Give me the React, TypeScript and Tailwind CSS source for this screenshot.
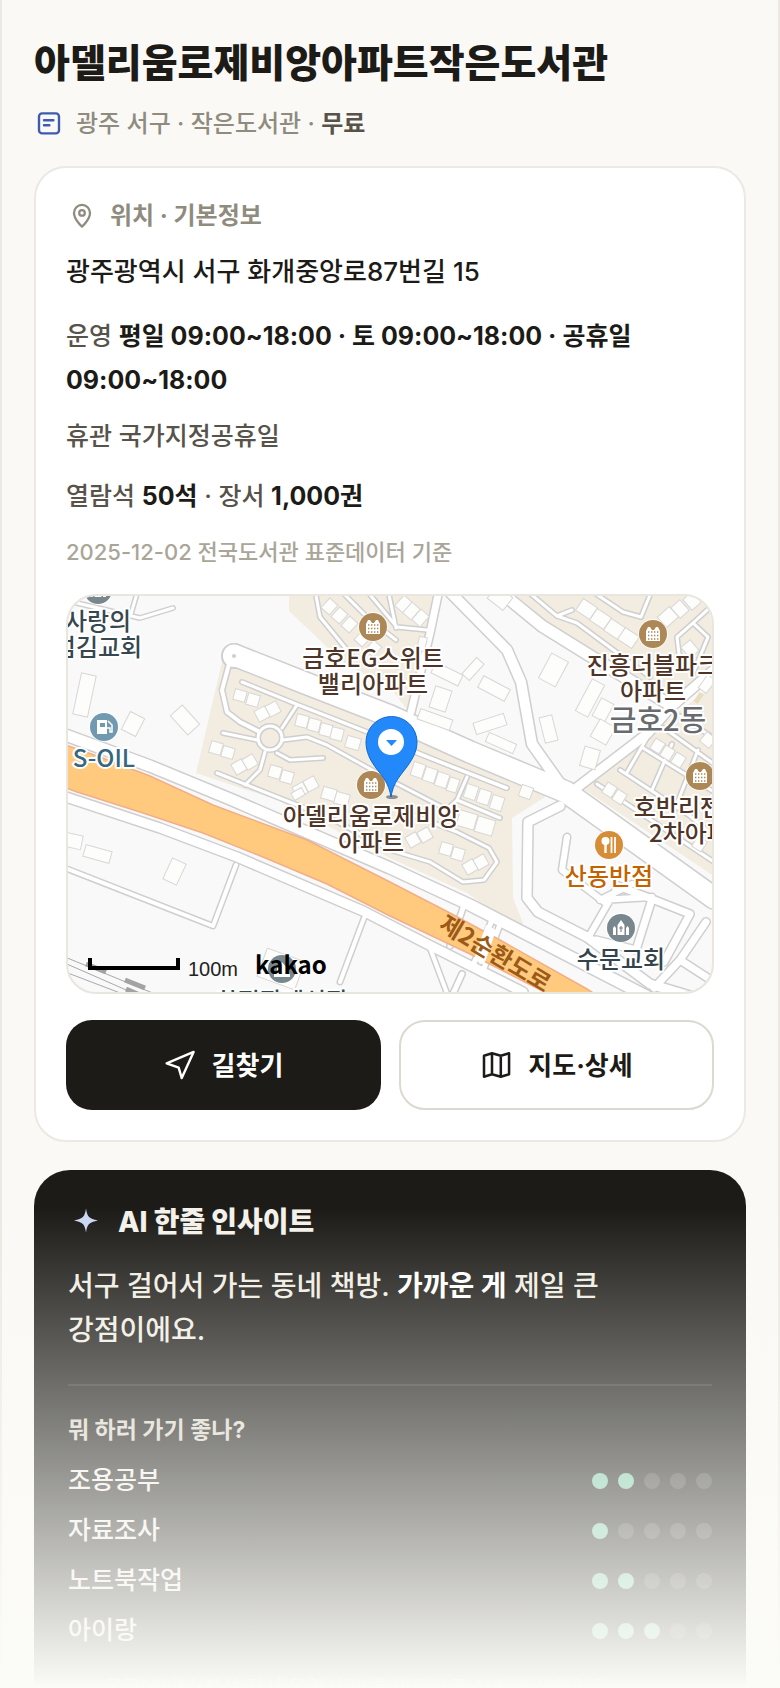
import type { ReactNode } from "react";

type Street = { d: string; w: number };
type Block = [x: number, y: number, w: number, h: number, angle: number];

const zones = [
    "M289 590V611L343 662L392 690L409 712L427 640L443 590Z",
    "M222 662L196 773L277 800L390 858L467 893L518 928L523 923L513 898L512 818L545 797L540 783L390 715L237 660Z",
    "M510 590L547 622L667 700L714 668V590Z",
    "M714 684L647 737L582 788L714 876Z",
];

const streets: Street[] = [
    { d: "M234 655L300 681L390 716L470 752L566 792L714 898", w: 21 },
    { d: "M448 590L507 650L521 682L532 744L566 792", w: 10 },
    { d: "M498 590L542 626L600 662L667 703", w: 11 },
    { d: "M566 796L647 734L670 708L716 668", w: 9 },
    { d: "M439 590L430 633L411 712", w: 7 },
    { d: "M60 599L140 618L173 608M138 590L131 614", w: 3 },
    { d: "M60 733L150 766L230 799L390 868L470 905L650 998", w: 11 },
    { d: "M60 795L160 828L237 857L363 911L427 944L523 992", w: 9 },
    { d: "M60 866L213 926L236 865M340 982L364 918M430 948L448 996", w: 4 },
    { d: "M463 908L450 946M500 924L482 974M492 920L472 968M462 974L452 996", w: 5 },
    { d: "M560 806L528 822L527 898L538 912L587 937L650 984L690 996", w: 9 },
    { d: "M567 837L562 870L607 904M652 897L600 900L632 884M588 938L618 886", w: 6 },
    { d: "M618 886L652 899L636 950L596 940M652 899L690 914L664 962M706 922L680 960L714 982M680 960L654 988", w: 7 },
    { d: "M242 682L296 704L370 733L440 762L506 788", w: 3 },
    { d: "M229 664L222 690L227 712L240 722L258 731", w: 4 },
    { d: "M297 705L282 728M223 733L257 740M283 740L307 737L327 745L390 780L440 806", w: 3 },
    { d: "M277 753L290 760L323 758M265 752L260 770L245 785M217 773L277 797L330 818L390 850L430 862L463 882L484 880L497 862L489 848L457 832L410 814", w: 3 },
    { d: "M417 753L507 788M467 777L457 800L443 813M457 800L500 818", w: 3 },
    { d: "M315 590L320 617L352 656M340 590L368 618L396 640M366 590L397 627L427 630M388 590L396 628", w: 3 },
    { d: "M526 590L557 616L577 623L650 677M590 590L623 612L641 617L652 590M557 616L572 610", w: 3 },
    { d: "M716 602L693 623L677 637L679 654L688 664M693 623L708 637L692 676", w: 3 },
    { d: "M643 748L714 792M620 770L690 816L714 836M597 784L714 862M664 728L714 764M680 716L714 738M647 738L626 774M672 744L652 790M698 750L676 806", w: 3 },
];

const railLines = "M60 955L160 996M60 961L140 996M60 970L128 996";

const blocks: Block[] = [
    [77, 674, 15, 42, 12], [125, 714, 16, 20, 27], [172, 712, 26, 16, 48],
    [64, 834, 18, 14, 12], [84, 848, 27, 12, 16], [167, 860, 15, 23, 25],
    [234, 690, 12, 11, 16], [247, 694, 12, 12, 16], [256, 708, 12, 12, -28], [267, 703, 12, 12, -28],
    [296, 715, 12, 12, 14], [308, 719, 12, 12, 14], [320, 724, 12, 12, 14], [331, 728, 12, 12, 14], [346, 737, 14, 12, 16],
    [210, 742, 12, 12, 16], [222, 747, 12, 11, 16], [233, 761, 12, 12, -30], [244, 756, 12, 12, -30],
    [269, 766, 12, 12, 16], [281, 771, 12, 12, 16], [294, 784, 12, 12, -28], [305, 778, 12, 12, -28],
    [322, 788, 14, 12, 16], [335, 793, 14, 12, 16], [292, 790, 12, 8, -30],
    [412, 763, 12, 14, 18], [424, 768, 12, 14, 18], [436, 773, 12, 14, 18], [448, 778, 10, 14, 18],
    [465, 785, 12, 14, 18], [478, 790, 12, 14, 18], [491, 796, 12, 14, 18], [520, 786, 12, 12, 20],
    [458, 812, 18, 16, 16], [476, 818, 18, 16, 16], [407, 834, 12, 12, -30], [419, 829, 12, 12, -30],
    [440, 843, 12, 12, 16], [452, 848, 12, 12, 16], [464, 861, 12, 12, -30], [475, 856, 12, 12, -30],
    [324, 600, 11, 13, 42], [334, 609, 11, 13, 42], [344, 618, 11, 13, 42], [357, 632, 11, 13, 42], [368, 642, 11, 13, 42],
    [398, 597, 11, 14, 42], [406, 604, 11, 14, 42], [415, 611, 11, 14, 42], [418, 637, 8, 14, 12],
    [432, 668, 30, 12, 26], [462, 664, 22, 10, -48], [432, 688, 17, 22, 18], [479, 682, 30, 13, 28],
    [418, 714, 34, 11, 20], [474, 718, 32, 12, -18], [486, 738, 30, 10, 24],
    [544, 656, 19, 28, 28], [583, 680, 14, 36, 28], [596, 700, 14, 20, 28], [542, 716, 13, 26, -14], [594, 722, 18, 20, 30], [582, 748, 16, 20, 16],
    [490, 590, 20, 16, 38], [578, 602, 17, 14, 34], [592, 612, 17, 14, 34], [606, 622, 17, 14, 34], [620, 631, 17, 14, 34],
    [660, 610, 16, 14, -42], [674, 602, 12, 14, -42], [686, 594, 12, 14, -42], [684, 642, 12, 14, -40], [702, 676, 10, 16, 36],
    [652, 740, 11, 12, 32], [662, 747, 11, 12, 32], [673, 754, 11, 12, 32], [604, 784, 11, 12, 32], [614, 791, 11, 12, 32],
    [702, 734, 12, 12, -50], [694, 838, 11, 12, 32], [261, 954, 40, 30, 20],
];

type Label = { x: number; y: number; text: string; fill: string; size?: number };

const labels: Label[] = [
    { x: 98, y: 630, text: "사랑의", fill: "#37474f" },
    { x: 98, y: 656, text: "섬김교회", fill: "#37474f" },
    { x: 373, y: 667, text: "금호EG스위트", fill: "#4e3527" },
    { x: 373, y: 693, text: "밸리아파트", fill: "#4e3527" },
    { x: 653, y: 674, text: "진흥더블파크", fill: "#4e3527" },
    { x: 653, y: 700, text: "아파트", fill: "#4e3527" },
    { x: 658, y: 731, text: "금호2동", fill: "#686b6e", size: 29 },
    { x: 104, y: 767, text: "S-OIL", fill: "#35677f" },
    { x: 700, y: 816, text: "호반리젠시빌", fill: "#4e3527" },
    { x: 700, y: 842, text: "2차아파트", fill: "#4e3527" },
    { x: 371, y: 825, text: "아델리움로제비앙", fill: "#4e3527" },
    { x: 371, y: 851, text: "아파트", fill: "#4e3527" },
    { x: 609, y: 885, text: "산동반점", fill: "#c46200" },
    { x: 621, y: 968, text: "수문교회", fill: "#33434b" },
    { x: 282, y: 1010, text: "화정장례식장", fill: "#37474f" },
];

function Poi({ x, y, color, children }: { x: number; y: number; color: string; children: ReactNode }) {
    return (
        <g transform={`translate(${x} ${y})`}>
            <circle r="15" fill="#fff" opacity="0.8" />
            <circle r="14" fill={color} />
            {children}
        </g>
    );
}

function Apartment({ x, y }: { x: number; y: number }) {
    return (
        <Poi x={x} y={y} color="#ad8755">
            <path d="M-7 7V-3L-5 -7H-3L-1 -4H1L3 -7H5L7 -3V7Z" fill="#fff" />
            <path d="M-5 -2H6M-5 1.5H6M-5 5H6" stroke="#ad8755" strokeWidth="1.4" strokeDasharray="1.4 1.6" />
        </Poi>
    );
}

function Church({ x, y }: { x: number; y: number }) {
    return (
        <Poi x={x} y={y} color="#78878e">
            <path d="M-3.500 7V-3L0 -8L3.500 -3V7ZM-8 7V0L-6.500 -2L-5 0V7ZM5 7V0L6.500 -2L8 0V7Z" fill="#fff" />
            <path d="M0 -2V4M-2 0H2" stroke="#78878e" strokeWidth="1.2" />
        </Poi>
    );
}

function LocationMap() {
    return (
        <div className="mt-[26px] h-[400px] overflow-hidden rounded-[30px] border-2 border-[#e9e6df] bg-[#f9f9f9]">
            <svg
                viewBox="68 596 644 396"
                preserveAspectRatio="xMidYMid slice"
                className="h-full w-full font-['Noto_Sans_CJK_KR',sans-serif]"
                role="img"
                aria-label="지도"
            >
                {zones.map((d) => (
                    <path key={d} d={d} fill="#f2ece1" />
                ))}

                <path d={railLines} fill="none" stroke="#a8a8a8" strokeWidth="1" />
                <path d="M86 964L106 972M125 980L145 988M126 989L142 996" stroke="#a3a3a3" strokeWidth="5" />

                {/* casings first so that crossings stay open */}
                <g fill="none" strokeLinejoin="round" strokeLinecap="round" stroke="#cfcfcf">
                    {streets.map(({ d, w }) => (
                        <path key={d} d={d} strokeWidth={w + 3} />
                    ))}
                    <circle cx="234" cy="656" r="12" fill="#fff" strokeWidth="2" />
                    <circle cx="270" cy="738" r="12" strokeWidth="6" />
                </g>
                <g fill="none" strokeLinejoin="round" strokeLinecap="round" stroke="#fff">
                    {streets.map(({ d, w }) => (
                        <path key={d} d={d} strokeWidth={w} />
                    ))}
                    <circle cx="270" cy="738" r="12" strokeWidth="3" />
                </g>
                <circle cx="234" cy="656" r="2" fill="#cfcfcf" />

                <g fill="#fdfdfc" stroke="#d8d7d5" strokeWidth="1">
                    {blocks.map(([x, y, w, h, angle]) => (
                        <rect
                            key={`${x}-${y}`}
                            x={x}
                            y={y}
                            width={w}
                            height={h}
                            transform={`rotate(${angle} ${x + w / 2} ${y + h / 2})`}
                        />
                    ))}
                </g>
                <rect x="696" y="692" width="5" height="11" fill="#e8ddbd" transform="rotate(35 698 698)" />

                <path
                    d="M60 743L100 757L150 776L213 805L307 840L390 882L450 913L500 940L587 989L604 1000H560L470 954L390 916L327 884L263 857L203 833L140 812L77 792L60 786Z"
                    fill="#ffca7d"
                    stroke="#f2ae88"
                    strokeWidth="1.5"
                />
                <path d="M486 925L496 930L484 965L474 959Z" fill="#fff" />

                <g fontSize="24" fontWeight="500" textAnchor="middle" stroke="#fff" strokeWidth="4" strokeLinejoin="round" paintOrder="stroke">
                    {labels.map(({ x, y, text, fill, size }) => (
                        <text key={`${x}-${y}`} x={x} y={y} fill={fill} fontSize={size}>
                            {text}
                        </text>
                    ))}
                </g>
                <text x="495" y="962" fontSize="24" fontWeight="700" textAnchor="middle" fill="#9c5a18" transform="rotate(31 495 954)">
                    제2순환도로
                </text>

                <Church x={98} y={590} />
                <Church x={621} y={928} />
                <Apartment x={373} y={627} />
                <Apartment x={653} y={634} />
                <Apartment x={700} y={776} />
                <Apartment x={371} y={785} />
                <Poi x={104} y={727} color="#719ab0">
                    <path d="M-7 -7H3V7H-7Z" fill="#fff" />
                    <path d="M-4 -4H1V0H-4Z" fill="#719ab0" />
                    <path d="M3 1H6V5H8V-2L4 -6" fill="none" stroke="#fff" strokeWidth="1.5" />
                </Poi>
                <Poi x={609} y={845} color="#d78d38">
                    <circle cx="-3.500" cy="-4" r="4" fill="#fff" />
                    <path d="M-3.500 -3V8" stroke="#fff" strokeWidth="2.4" />
                    <path d="M2.500 -8V8M6 -8V8" stroke="#fff" strokeWidth="1.8" />
                </Poi>
                <Poi x={282} y={969} color="#78878e">
                    <path d="M-8 8V5H-5V-1L0 -7L5 -1V5H8V8Z" fill="#fff" />
                </Poi>

                <ellipse cx="392" cy="797" rx="6" ry="2" fill="#5d6672" opacity="0.7" />
                <path
                    d="M391 797C389 783 382 776 376 768C370 760 366 752 366 742A25.500 25.500 0 0 1 417 742C417 752 412 760 406 768C400 776 393 783 391 797Z"
                    fill="#2389fb"
                    stroke="#1268cf"
                    strokeWidth="1"
                />
                <circle cx="391" cy="742" r="13" fill="#fff" />
                <path d="M386 740H397L391.500 746Z" fill="#2389fb" />

                <path d="M90 958V968H178V958" fill="none" stroke="#000" strokeWidth="4" />
                <text x="188" y="976" fontSize="20" fill="#222" className="font-['Liberation_Sans',sans-serif]">
                    100m
                </text>
                <text x="255" y="974" fontSize="24" fontWeight="600" fill="#000" className="font-['Noto_Sans_CJK_KR',sans-serif]">
                    kakao
                </text>
            </svg>
        </div>
    );
}

const purposes = [
    { name: "조용공부", score: 2 },
    { name: "자료조사", score: 1 },
    { name: "노트북작업", score: 2 },
    { name: "아이랑", score: 3 },
];

export default function App() {
    return (
        <div className="relative h-screen overflow-hidden bg-[#faf9f6] font-['Inter','Noto_Sans_CJK_KR',sans-serif] text-[#1c1b17]">
            <main className="min-h-full border-x-2 border-[#ebe9e2] px-8 pt-[38px] break-keep">
                <h1 className="text-[39px] leading-[50px] font-extrabold">아델리움로제비앙아파트작은도서관</h1>
                <div className="mt-5 flex items-center gap-3 text-2xl leading-8 font-medium text-[#8f8b7f]">
                    <svg className="h-[30px] w-[30px]" viewBox="0 0 24 24" fill="none" stroke="#3f5bb0" strokeWidth="1.9" strokeLinecap="round">
                        <rect x="4" y="3.500" width="16" height="16" rx="2.500" />
                        <path d="M8 9H15.500M8 13H12.300" />
                    </svg>
                    <p>
                        광주 서구 · 작은도서관 · <span className="font-semibold text-[#57534a]">무료</span>
                    </p>
                </div>

                <section className="mt-[26px] rounded-[32px] border-2 border-[#ebe9e2] bg-white px-[30px] pt-8 pb-[30px]">
                    <h2 className="flex items-center gap-3 text-2xl leading-8 font-bold text-[#8f8b7f]">
                        <svg className="h-8 w-8" viewBox="0 0 24 24" fill="none" stroke="currentColor" strokeWidth="1.7" strokeLinejoin="round">
                            <path d="M12 20S18 14.600 18 9.700A6 6 0 0 0 6 9.700C6 14.600 12 20 12 20Z" />
                            <circle cx="12" cy="9.700" r="2.100" />
                        </svg>
                        위치 · 기본정보
                    </h2>
                    <p className="mt-5 text-[26px] leading-10 font-medium">광주광역시 서구 화개중앙로87번길 15</p>
                    <div className="text-[25px] leading-[44px] font-medium text-[#57534a]">
                        <p className="mt-[22px]">
                            운영 <strong className="font-bold text-[#1c1b17]">평일 09:00~18:00 · 토 09:00~18:00 · 공휴일 09:00~18:00</strong>
                        </p>
                        <p className="mt-3">휴관 국가지정공휴일</p>
                        <p className="mt-4">
                            열람석 <strong className="font-bold text-[#1c1b17]">50석</strong> · 장서{" "}
                            <strong className="font-bold text-[#1c1b17]">1,000권</strong>
                        </p>
                    </div>
                    <p className="mt-[18px] text-[22px] leading-8 font-medium text-[#aaa599]">2025-12-02 전국도서관 표준데이터 기준</p>

                    <LocationMap />

                    <div className="mt-[26px] grid grid-cols-2 gap-[18px] text-[26px] font-bold">
                        <button type="button" className="flex h-[90px] items-center justify-center gap-4 rounded-[26px] bg-[#1c1b17] text-white">
                            <svg className="h-8 w-8" viewBox="0 0 24 24" fill="none" stroke="currentColor" strokeWidth="1.8" strokeLinejoin="round">
                                <path d="M2 10.800L22.200 2.200L13.300 21.800L11 14Z" />
                            </svg>
                            길찾기
                        </button>
                        <button type="button" className="flex h-[90px] items-center justify-center gap-4 rounded-[26px] border-2 border-[#dcd9d0] bg-white">
                            <svg className="h-8 w-8" viewBox="0 0 24 24" fill="none" stroke="currentColor" strokeWidth="1.9" strokeLinejoin="round">
                                <path d="M3 5L9 3.200L15.600 5L21.800 3.200V19L15.600 20.800L9 19L3 20.800ZM9 3.200V19M15.600 5V20.800" />
                            </svg>
                            지도·상세
                        </button>
                    </div>
                </section>

                <section className="mt-7 rounded-[36px] bg-[#1c1b17] px-[34px] pt-8 pb-10 text-[#f3f1ea]">
                    <h2 className="flex items-center gap-4 text-[28px] leading-10 font-extrabold">
                        <svg className="ml-[2px] h-8 w-8" viewBox="0 0 32 32" fill="#cbd6f3">
                            <path d="M16 2.500C17.200 10.500 19 12.900 28 14.500C19 16.100 17.200 18.500 16 26.500C14.800 18.500 13 16.100 4 14.500C13 12.900 14.800 10.500 16 2.500Z" />
                        </svg>
                        AI 한줄 인사이트
                    </h2>
                    <p className="mt-[22px] text-[28px] leading-[44px] font-medium text-[#f0ede2]">
                        서구 걸어서 가는 동네 책방. <strong className="font-bold text-white">가까운 게</strong> 제일 큰
                        <br />
                        강점이에요.
                    </p>
                    <hr className="mt-8 border-t-2 border-white/10" />
                    <h3 className="mt-7 text-[23px] leading-8 font-bold text-[#d9d5c8]">뭐 하러 가기 좋나?</h3>
                    <ul className="mt-[10px] text-[25px] font-medium">
                        {purposes.map((purpose) => (
                            <li key={purpose.name} className="flex h-[50px] items-center justify-between">
                                {purpose.name}
                                <span className="flex gap-[10px]">
                                    {[1, 2, 3, 4, 5].map((n) => (
                                        <span key={n} className={`h-4 w-4 rounded-full ${n <= purpose.score ? "bg-[#7ccaa5]" : "bg-white/15"}`} />
                                    ))}
                                </span>
                            </li>
                        ))}
                    </ul>
                    <p className="mt-4 flex items-center gap-3 text-xl leading-8 text-[#b5b1a5]">
                        <svg className="h-6 w-6" viewBox="0 0 32 32" fill="currentColor">
                            <path d="M16 4C17.200 12 19 14.400 28 16C19 17.600 17.200 20 16 28C14.800 20 13 17.600 4 16C13 14.400 14.800 12 16 4Z" />
                        </svg>
                        공공데이터(좌석·장서·운영시간)를 바탕으로 AI가 분석했어요
                    </p>
                </section>
            </main>
            <div className="pointer-events-none absolute inset-x-0 bottom-0 h-[480px] bg-gradient-to-b from-[#fbfbf8]/0 to-[#fbfbf8]" />
        </div>
    );
}
